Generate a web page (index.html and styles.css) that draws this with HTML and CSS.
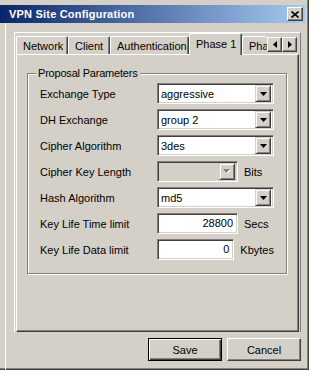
FILE: index.html
```html
<!DOCTYPE html>
<html lang="en">

<head>
    <meta charset="UTF-8">
    <title>VPN Site Configuration</title>
    <link rel="stylesheet" href="styles.css">
</head>

<body>
    <div class="window">
        <div class="titlebar">
            <span class="title">VPN Site Configuration</span>
            <span class="close">
                <svg width="8" height="7" viewBox="0 0 8 7"><path d="M0.5 0.5L7.5 6.5M7.5 0.5L0.5 6.5" stroke="#000" stroke-width="1.6"/></svg>
            </span>
        </div>

        <div class="content">
            <div class="sheet">
                <div class="tabs">
                    <div class="tab w-network">Network</div>
                    <div class="tab w-client">Client</div>
                    <div class="tab w-auth">Authentication</div>
                    <div class="tab active w-phase1">Phase 1</div>
                    <div class="tab cut w-phase2">Pha</div>
                    <div class="scroller">
                        <span class="arrow-btn"><svg width="4" height="7" viewBox="0 0 4 7"><path d="M4 0v7L0 3.5z"/></svg></span>
                        <span class="arrow-btn"><svg width="4" height="7" viewBox="0 0 4 7"><path d="M0 0v7l4-3.5z"/></svg></span>
                    </div>
                </div>

                <div class="panel">
                    <div class="group">
                        <span class="legend">Proposal Parameters</span>

                        <div class="fields">
                            <label>Exchange Type</label>
                            <div class="select"><span>aggressive</span><span class="drop"><svg width="7" height="4" viewBox="0 0 7 4"><path d="M0 0h7L3.5 4z"/></svg></span></div>

                            <label>DH Exchange</label>
                            <div class="select"><span>group 2</span><span class="drop"><svg width="7" height="4" viewBox="0 0 7 4"><path d="M0 0h7L3.5 4z"/></svg></span></div>

                            <label>Cipher Algorithm</label>
                            <div class="select"><span>3des</span><span class="drop"><svg width="7" height="4" viewBox="0 0 7 4"><path d="M0 0h7L3.5 4z"/></svg></span></div>

                            <label>Cipher Key Length</label>
                            <div class="with-unit">
                                <div class="select short disabled"><span></span><span class="drop"><svg width="8" height="5" viewBox="0 0 8 5"><path d="M1 1h7L4.5 5z" fill="#fff"/><path d="M0 0h7L3.5 4z" fill="#808080"/></svg></span></div>
                                <span class="unit">Bits</span>
                            </div>

                            <label>Hash Algorithm</label>
                            <div class="select"><span>md5</span><span class="drop"><svg width="7" height="4" viewBox="0 0 7 4"><path d="M0 0h7L3.5 4z"/></svg></span></div>

                            <label>Key Life Time limit</label>
                            <div class="with-unit">
                                <div class="input">28800</div>
                                <span class="unit">Secs</span>
                            </div>

                            <label>Key Life Data limit</label>
                            <div class="with-unit">
                                <div class="input">0</div>
                                <span class="unit">Kbytes</span>
                            </div>
                        </div>
                    </div>
                </div>
            </div>

            <div class="buttons">
                <div class="btn default"><span>Save</span></div>
                <div class="btn"><span>Cancel</span></div>
            </div>
        </div>
    </div>
</body>

</html>
```

FILE: styles.css
```css
body {
    margin: 0;
    background: #fff;
    font-family: "Liberation Sans", Arial, sans-serif;
    font-size: 11px;
    color: #000;
}

.window {
    box-sizing: border-box;
    width: 309px;
    height: 370px;
    padding-top: 5px;
    background: #d4d0c8;
    border-right: 1px solid #404040;
    border-bottom: 1px solid #404040;
    box-shadow: inset -1px -1px 0 #808080;
}

/* title bar */
.titlebar {
    display: flex;
    align-items: center;
    justify-content: space-between;
    height: 18px;
    margin-right: 3px;
    padding: 0 2px 0 9px;
    background: linear-gradient(to right, #0a246a, #a6caf0);
}

.title {
    color: #fff;
    font-weight: bold;
    font-size: 11px;
    letter-spacing: 0.2px;
}

.close {
    box-sizing: border-box;
    width: 16px;
    height: 14px;
    display: flex;
    align-items: center;
    justify-content: center;
    background: #d4d0c8;
    border: 1px solid;
    border-color: #fff #404040 #404040 #fff;
    box-shadow: inset -1px -1px 0 #808080;
}

/* client area */
.content {
    margin-left: 5px;
    height: 341px;
    border-left: 1px solid #fff;
    padding: 9px 0 0 8px;
}

.sheet {
    box-sizing: border-box;
    width: 287px;
    height: 300px;
    border-top: 1px solid #fff;
    border-left: 1px solid #fff;
    border-right: 1px solid #808080;
    display: flex;
    flex-direction: column;
}

/* tabs */
.tabs {
    display: flex;
    align-items: flex-end;
    height: 21px;
    padding-left: 1px;
    position: relative;
    z-index: 1;
}

.tab {
    box-sizing: border-box;
    height: 18px;
    padding: 3px 0 0 6px;
    border-top: 1px solid #fff;
    border-left: 1px solid #fff;
    border-right: 1px solid #404040;
    box-shadow: inset -1px 0 0 #808080;
    border-radius: 2px 2px 0 0;
    white-space: nowrap;
}

.tab.active {
    padding-top: 4px;
    background: #d4d0c8;
    margin-bottom: -1px;
    height: 22px;
}

.w-network { width: 52px; }
.w-client { width: 42px; }
.w-auth { width: 79px; }
.w-phase1 { width: 53px; }
.w-phase2 { width: 25px; border-right: none; box-shadow: none; }

.scroller {
    display: flex;
    align-self: center;
    margin-top: 2px;
}

.arrow-btn {
    box-sizing: border-box;
    width: 15px;
    height: 15px;
    display: flex;
    align-items: center;
    justify-content: center;
    background: #d4d0c8;
    border: 1px solid;
    border-color: #fff #404040 #404040 #fff;
    box-shadow: inset -1px -1px 0 #808080;
}

.panel {
    flex: 1;
    margin: 0 1px;
    border-top: 1px solid #fff;
    border-left: 1px solid #fff;
    border-right: 1px solid #404040;
    border-bottom: 1px solid #404040;
    box-shadow: inset -1px -1px 0 #808080;
    padding: 18px 0 0 10px;
}

/* group box */
.group {
    box-sizing: border-box;
    width: 260px;
    height: 201px;
    border: 1px solid #808080;
    box-shadow: 1px 1px 0 #fff, inset 1px 1px 0 #fff;
    padding: 0 0 0 12px;
}

.legend {
    display: inline-block;
    margin: -7px 0 0 -4px;
    padding: 0 2px;
    background: #d4d0c8;
    vertical-align: top;
    line-height: 13px;
    letter-spacing: -0.2px;
}

.fields {
    display: grid;
    grid-template-columns: 117px 117px;
    grid-auto-rows: 21px;
    row-gap: 5px;
    align-items: center;
    margin-top: -3px;
}

.select,
.input {
    box-sizing: border-box;
    height: 21px;
    background: #fff;
    border: 1px solid;
    border-color: #808080 #fff #fff #808080;
    box-shadow: inset 1px 1px 0 #404040, inset -1px -1px 0 #d4d0c8;
}

.select {
    display: flex;
    align-items: center;
    justify-content: space-between;
    padding: 2px 2px 2px 3px;
    width: 117px;
}

.select.short {
    width: 81px;
}

.select.disabled {
    background: #d4d0c8;
}

.drop {
    box-sizing: border-box;
    width: 16px;
    height: 17px;
    display: flex;
    align-items: center;
    justify-content: center;
    background: #d4d0c8;
    border: 1px solid;
    border-color: #d4d0c8 #404040 #404040 #d4d0c8;
    box-shadow: inset 1px 1px 0 #fff, inset -1px -1px 0 #808080;
}

.input {
    width: 81px;
    padding: 3px 4px 0 0;
    text-align: right;
}

.with-unit {
    display: flex;
    align-items: center;
    gap: 6px;
}

/* dialog buttons */
.buttons {
    display: flex;
    justify-content: flex-end;
    gap: 5px;
    width: 287px;
    margin-top: 6px;
}

.btn {
    box-sizing: border-box;
    width: 74px;
    height: 23px;
    display: flex;
    align-items: center;
    justify-content: center;
    border: 1px solid;
    border-color: #fff #404040 #404040 #fff;
    box-shadow: inset -1px -1px 0 #808080;
}

.btn.default {
    border: 1px solid #000;
    box-shadow: inset 1px 1px 0 #fff, inset -1px -1px 0 #404040, inset -2px -2px 0 #808080;
}
```
